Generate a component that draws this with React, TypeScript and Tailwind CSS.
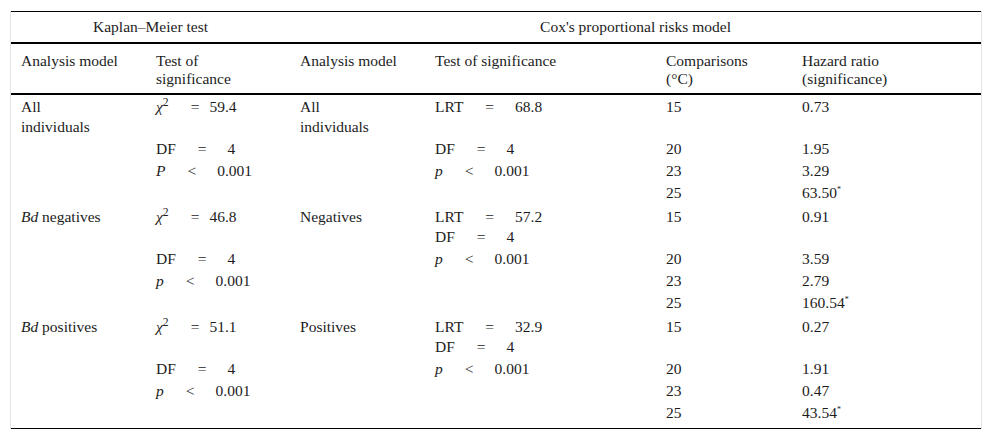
import * as React from "react";

type Row = {
  cells: React.ReactNode[];
  tail?: boolean;
  first?: boolean;
  last?: boolean;
};

function Expr({
  sym,
  op,
  val,
  tight,
}: {
  sym: React.ReactNode;
  op: string;
  val: string;
  tight?: boolean;
}) {
  return (
    <span className="inline-flex items-baseline whitespace-nowrap">
      <span>{sym}</span>
      <span className="ml-[22px]">{op}</span>
      <span className={tight ? "ml-[10px]" : "ml-[21px]"}>{val}</span>
    </span>
  );
}

const chi = (
  <span>
    <i>χ</i>
    <sup>2</sup>
  </span>
);

function Star({ v }: { v: string }) {
  return (
    <span>
      {v}
      <sup className="-top-[0.7em] text-[8px]">*</sup>
    </span>
  );
}

function group(
  km: React.ReactNode,
  cox: React.ReactNode,
  chiVal: string,
  bigP: boolean,
  lrt: string,
  dfWithLrt: boolean,
  hr: string[],
  first?: boolean,
  last?: boolean
): Row[] {
  const pSym = <i>{bigP ? "P" : "p"}</i>;
  return [
    {
      first,
      cells: [
        km,
        <Expr sym={chi} op="=" val={chiVal} tight />,
        cox,
        dfWithLrt ? (
          <div>
            <Expr sym="LRT" op="=" val={lrt} />
            <br />
            <Expr sym="DF" op="=" val="4" />
          </div>
        ) : (
          <Expr sym="LRT" op="=" val={lrt} />
        ),
        "15",
        hr[0],
      ],
    },
    {
      cells: [
        "",
        <Expr sym="DF" op="=" val="4" />,
        "",
        dfWithLrt ? (
          <Expr sym={<i>p</i>} op="<" val="0.001" />
        ) : (
          <Expr sym="DF" op="=" val="4" />
        ),
        "20",
        hr[1],
      ],
    },
    {
      cells: [
        "",
        <Expr sym={pSym} op="<" val="0.001" />,
        "",
        dfWithLrt ? "" : <Expr sym={<i>p</i>} op="<" val="0.001" />,
        "23",
        hr[2],
      ],
    },
    {
      tail: true,
      last,
      cells: ["", "", "", "", "25", <Star v={hr[3]} />],
    },
  ];
}

const rows: Row[] = [
  ...group(
    <>
      All
      <br />
      individuals
    </>,
    <>
      All
      <br />
      individuals
    </>,
    "59.4",
    true,
    "68.8",
    false,
    ["0.73", "1.95", "3.29", "63.50"],
    true
  ),
  ...group(
    <>
      <i>Bd</i> negatives
    </>,
    "Negatives",
    "46.8",
    false,
    "57.2",
    true,
    ["0.91", "3.59", "2.79", "160.54"]
  ),
  ...group(
    <>
      <i>Bd</i> positives
    </>,
    "Positives",
    "51.1",
    false,
    "32.9",
    true,
    ["0.27", "1.91", "0.47", "43.54"],
    false,
    true
  ),
];

const widths = ["w-[135px]", "w-[144px]", "w-[135px]", "w-[231px]", "w-[136px]", "w-[189px]"];

const heads: React.ReactNode[] = [
  <>Analysis model</>,
  <>
    Test of
    <br />
    significance
  </>,
  <>Analysis model</>,
  <>Test of significance</>,
  <>
    Comparisons
    <br />
    (°C)
  </>,
  <>
    Hazard ratio
    <br />
    (significance)
  </>,
];

export default function App() {
  return (
    <div className="min-h-screen bg-white pt-[11px] font-['Liberation_Serif','Times_New_Roman',serif] text-[15.5px] text-[#1c1c1c]">
      <div className="ml-[10px] w-[972px] border-x border-[#e3e3e3]">
        <table className="w-[970px] table-fixed border-collapse">
          <colgroup>
            {widths.map((w, i) => (
              <col key={i} className={w} />
            ))}
          </colgroup>
          <thead>
            <tr className="border-t border-b-2 border-black">
              <th colSpan={2} className="px-[10px] py-[5px] text-center font-normal leading-[20px]">
                Kaplan–Meier test
              </th>
              <th colSpan={4} className="px-[10px] py-[5px] text-center font-normal leading-[20px]">
                Cox's proportional risks model
              </th>
            </tr>
            <tr className="border-b-2 border-black">
              {heads.map((c, i) => (
                <th
                  key={i}
                  className="px-[10px] pt-[8px] pb-[5px] text-left align-top font-normal leading-[18px] whitespace-nowrap"
                >
                  {c}
                </th>
              ))}
            </tr>
          </thead>
          <tbody>
            {rows.map((r, ri) => (
              <tr key={ri} className={r.last ? "border-b border-black" : ""}>
                {r.cells.map((c, ci) => (
                  <td
                    key={ci}
                    className={`px-[10px] align-top leading-[20px] whitespace-nowrap ${
                      r.first ? "pt-[2px]" : "pt-[1px]"
                    } ${r.last ? "pb-[5px]" : r.tail ? "pb-[3px]" : "pb-[1px]"}`}
                  >
                    {c}
                  </td>
                ))}
              </tr>
            ))}
          </tbody>
        </table>
      </div>
    </div>
  );
}
